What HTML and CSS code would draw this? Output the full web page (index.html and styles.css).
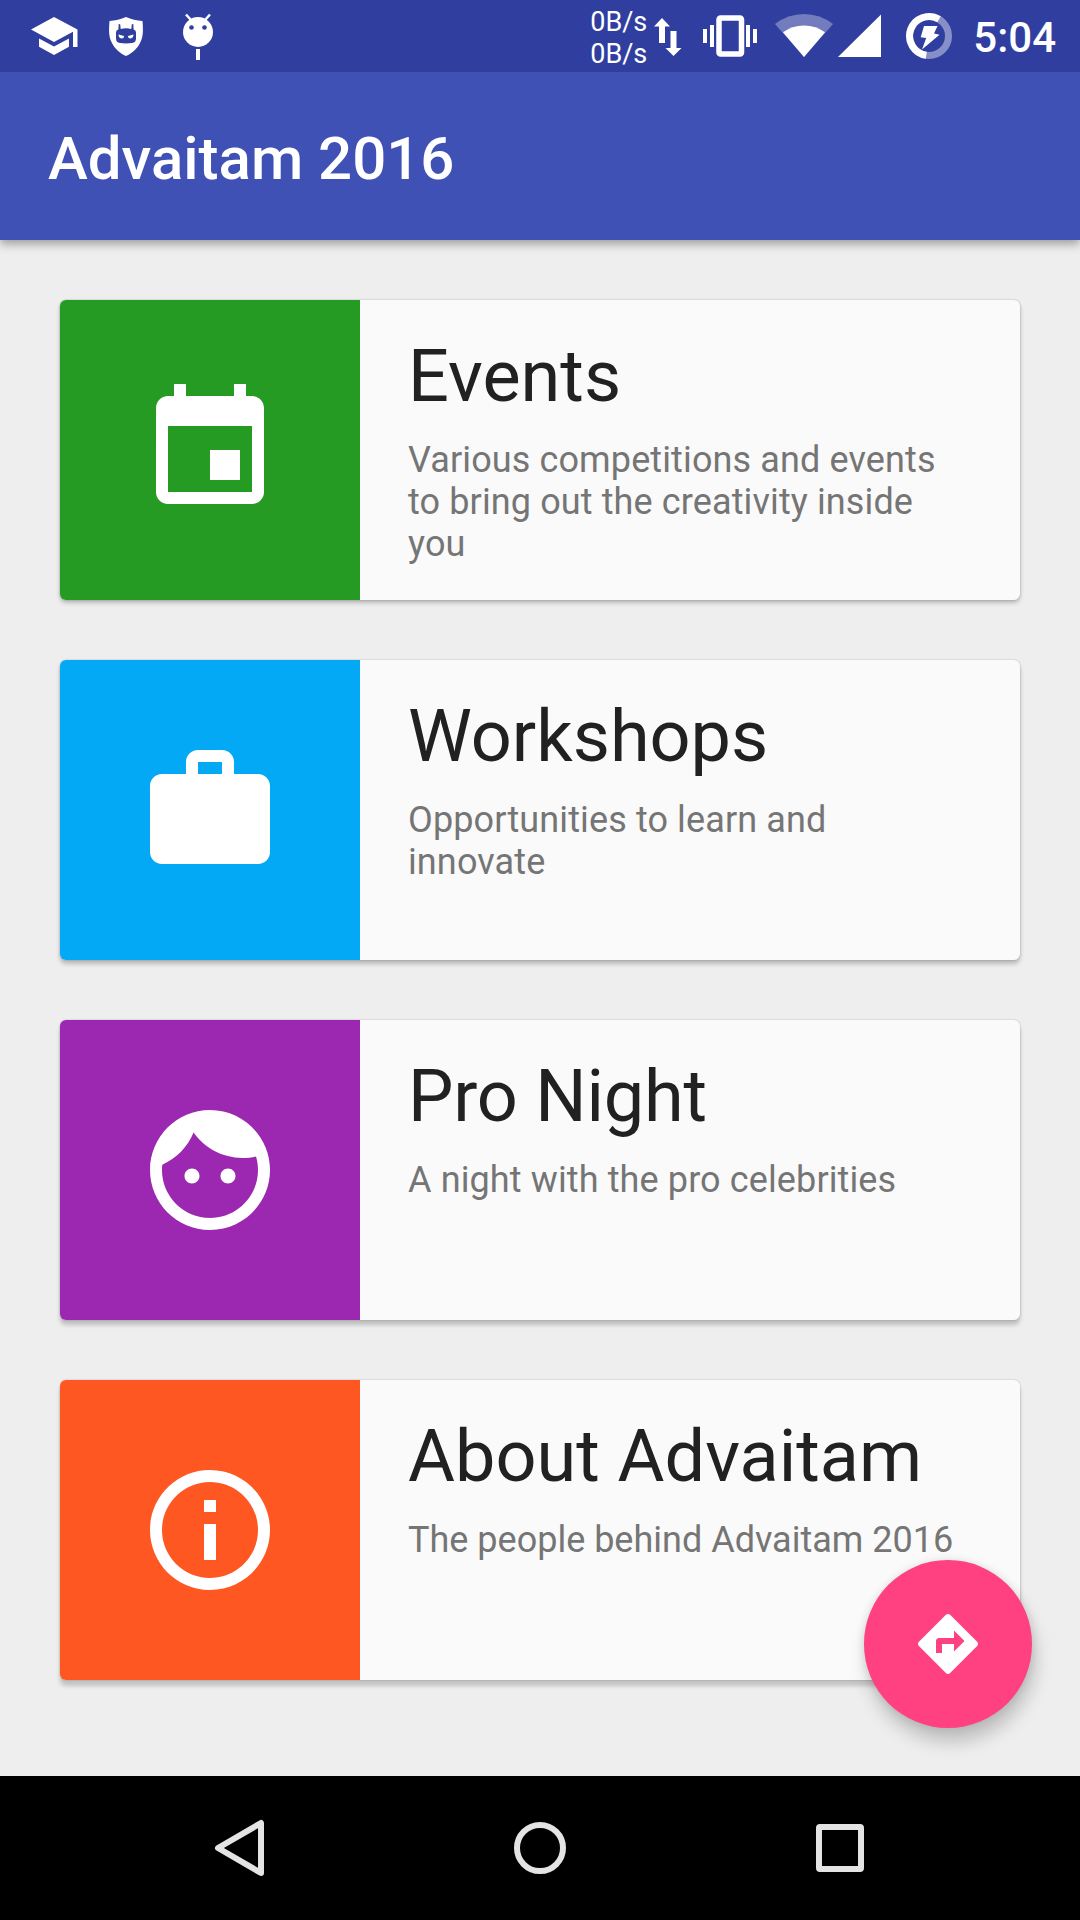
FILE: index.html
```html
<!DOCTYPE html>
<html lang="en">
<head>
    <meta charset="UTF-8">
    <title>Advaitam 2016</title>
    <link rel="stylesheet" href="styles.css">
</head>
<body>
    <div class="status-bar">
        <div class="notifications">
            <svg width="47" height="72" viewBox="31 0 47 72">
                <path d="M54 17L31 29.500 54 42l19-10.300V47h4.500V29.500zM39 38.500v8.300L54 55l15-8.200v-8.300L54 46.500z"/>
            </svg>
            <svg width="36" height="72" viewBox="108 0 36 72">
                <path d="M126 17c5 2.500 11 3.500 16.500 4 .8 10 .8 16-2.500 22-3 6-8 10.500-14 13-6-2.500-11-7-14-13-3.300-6-3.300-12-2.500-22 5.500-.5 11.500-1.500 16.500-4z"/>
                <path class="cutout" d="M118.700 24l1.500.3.5 4.700q5.300-1.500 10.600 0l.5-4.700 1.500-.3.3 5.500q2.400.6 2.400 3v6q0 4-4 4.500-6 .8-12 0-4-.5-4-4.500v-6q0-2.400 2.400-3z"/>
                <path d="M118.500 34.500l5.500 1.500q0 2.500-2.500 2.500-3-.5-3-4zM133.500 34.500l-5.500 1.500q0 2.500 2.500 2.500 3-.5 3-4z"/>
            </svg>
            <svg width="32" height="72" viewBox="182 0 32 72">
                <circle cx="198" cy="32" r="15"/>
                <path class="antenna" d="M186 14.500l5 5.500M210 14.500l-5 5.500"/>
                <circle class="cutout" cx="191.500" cy="27.500" r="2.300"/>
                <circle class="cutout" cx="204.500" cy="27.500" r="2.300"/>
                <path d="M196 49h4v11h-4z"/>
            </svg>
        </div>
        <div class="system">
            <div class="speed">
                <span>0B/s</span>
                <span>0B/s</span>
            </div>
            <svg class="arrows" width="28" height="72" viewBox="654 0 28 72">
                <path d="M662 18l8 8.500h-5V43h-6V26.500h-5zM670.500 31h6v17h5l-8 8-8-8h5z"/>
            </svg>
            <svg class="vibrate" width="54" height="72" viewBox="703 0 54 72">
                <rect class="phone" x="719" y="18" width="22.500" height="36" rx="1.500"/>
                <path d="M703 29h4v14h-4zM710 25h4v22h-4zM746 25h4v22h-4zM753 29h4v14h-4z"/>
            </svg>
            <svg class="wifi" width="58" height="72" viewBox="775 0 58 72">
                <path class="faded" d="M804 57L775 24q13-10 29-10t29 10z"/>
                <path d="M804 57L783 32.300q9-6.800 21-6.800t21 6.800z"/>
            </svg>
            <svg class="signal" width="43" height="72" viewBox="838 0 43 72">
                <path d="M838 57l43-42.500V57z"/>
            </svg>
            <svg class="battery" width="46" height="72" viewBox="906 0 46 72">
                <circle class="ring faded" cx="929" cy="36" r="19.500"/>
                <path class="ring" d="M926.300 55.300A19.500 19.500 0 1 1 939 19.200"/>
                <path d="M924 26h13.500l-3.500 7.500 5.500 1.200L922 49.500l4.200-11.500-5.500-.7z"/>
            </svg>
            <span class="clock">5:04</span>
        </div>
    </div>

    <div class="toolbar">
        <h1>Advaitam 2016</h1>
    </div>

    <div class="container">
        <div class="card">
            <div class="card-icon green">
                <svg viewBox="0 0 24 24"><path d="M17 12h-5v5h5v-5zM16 1v2H8V1H6v2H5c-1.110 0-1.990.9-1.990 2L3 19c0 1.100.89 2 2 2h14c1.100 0 2-.9 2-2V5c0-1.100-.9-2-2-2h-1V1h-2zm3 18H5V8h14v11z"/></svg>
            </div>
            <div class="card-text">
                <h2>Events</h2>
                <p>Various competitions and events to bring out the creativity inside you</p>
            </div>
        </div>

        <div class="card second">
            <div class="card-icon blue">
                <svg viewBox="0 0 24 24"><path d="M20 6h-4V4c0-1.110-.89-2-2-2h-4c-1.110 0-2 .89-2 2v2H4c-1.110 0-2 .89-2 2v11c0 1.110.89 2 2 2h16c1.110 0 2-.89 2-2V8c0-1.110-.89-2-2-2zm-6 0h-4V4h4v2z"/></svg>
            </div>
            <div class="card-text">
                <h2>Workshops</h2>
                <p>Opportunities to learn and innovate</p>
            </div>
        </div>

        <div class="card third">
            <div class="card-icon purple">
                <svg viewBox="0 0 24 24"><path d="M9 11.750c-.69 0-1.250.56-1.250 1.250s.56 1.250 1.250 1.250 1.250-.56 1.250-1.250-.56-1.250-1.250-1.250zm6 0c-.69 0-1.250.56-1.250 1.250s.56 1.250 1.250 1.250 1.250-.56 1.250-1.250-.56-1.250-1.250-1.250zM12 2C6.480 2 2 6.480 2 12s4.480 10 10 10 10-4.480 10-10S17.520 2 12 2zm0 18c-4.410 0-8-3.590-8-8 0-.29.02-.58.05-.86 2.360-1.050 4.230-2.980 5.210-5.370C11.070 8.330 14.050 10 17.420 10c.78 0 1.530-.09 2.250-.26.21.71.33 1.470.33 2.260 0 4.410-3.590 8-8 8z"/></svg>
            </div>
            <div class="card-text">
                <h2>Pro Night</h2>
                <p>A night with the pro celebrities</p>
            </div>
        </div>

        <div class="card fourth">
            <div class="card-icon orange">
                <svg viewBox="0 0 24 24"><path d="M11 17h2v-6h-2v6zm1-15C6.480 2 2 6.480 2 12s4.480 10 10 10 10-4.480 10-10S17.520 2 12 2zm0 18c-4.410 0-8-3.590-8-8s3.590-8 8-8 8 3.590 8 8-3.590 8-8 8zM11 9h2V7h-2v2z"/></svg>
            </div>
            <div class="card-text">
                <h2>About Advaitam</h2>
                <p>The people behind Advaitam 2016</p>
            </div>
        </div>

        <button class="fab" aria-label="Directions">
            <svg viewBox="0 0 24 24"><path d="M21.710 11.290l-9-9c-.39-.39-1.020-.39-1.410 0l-9 9c-.39.39-.39 1.020 0 1.410l9 9c.39.39 1.020.39 1.410 0l9-9c.39-.38.39-1.010 0-1.410zM14 14.500V12h-4v3H8v-4c0-.55.45-1 1-1h5V7.500l3.500 3.500-3.500 3.500z"/></svg>
        </button>
    </div>

    <div class="nav-bar">
        <svg viewBox="0 0 72 72"><path d="M57 11v50L14 36z"/></svg>
        <svg viewBox="0 0 72 72"><circle cx="36" cy="36" r="23"/></svg>
        <svg viewBox="0 0 72 72"><rect x="15" y="15" width="42" height="42" rx="1"/></svg>
    </div>
</body>
</html>
```

FILE: styles.css
```css
* {
    box-sizing: border-box;
}
body {
    margin: 0;
    width: 1080px;
    height: 1920px;
    overflow: hidden;
    display: flex;
    flex-direction: column;
    background: #eeeeee;
    font-family: Roboto, sans-serif;
}
h1, h2, p {
    margin: 0;
}
svg {
    display: block;
    flex: none;
    fill: #fff;
}

/* Status bar */
.status-bar {
    position: relative;
    z-index: 1;
    display: flex;
    justify-content: space-between;
    height: 72px;
    padding: 0 24px 0 31px;
    background: #303f9f;
    color: #fff;
}
.notifications {
    display: flex;
    gap: 30px;
}
.notifications svg:last-child {
    margin-left: 8px;
}
.cutout {
    fill: #303f9f;
}
.antenna {
    fill: none;
    stroke: #fff;
    stroke-width: 2.5;
}
.system {
    display: flex;
}
.speed {
    display: flex;
    flex-direction: column;
    padding-top: 6px;
    font-size: 27px;
    line-height: 32px;
}
.arrows {
    margin-left: 7px;
}
.vibrate {
    margin-left: 21px;
}
.phone {
    fill: none;
    stroke: #fff;
    stroke-width: 5.5;
}
.wifi {
    margin-left: 18px;
}
.signal {
    margin-left: 5px;
}
.battery {
    margin-left: 25px;
}
.ring {
    fill: none;
    stroke: #fff;
    stroke-width: 7;
}
.faded {
    opacity: 0.32;
}
.ring.faded {
    opacity: 0.42;
}
.clock {
    margin-left: 21px;
    font-size: 42px;
    font-weight: 500;
    line-height: 75px;
}

/* Toolbar */
.toolbar {
    display: flex;
    align-items: center;
    height: 168px;
    padding: 6px 48px 0;
    background: #3f51b5;
    color: #fff;
    box-shadow: 0 4px 9px rgba(0, 0, 0, 0.34);
}
.toolbar h1 {
    font-size: 60px;
    font-weight: 500;
    line-height: 70px;
}

/* Cards */
.container {
    position: relative;
    flex: 1;
    display: flex;
    flex-direction: column;
    gap: 60px;
    padding: 60px;
}
.card {
    display: flex;
    height: 300px;
    border-radius: 6px;
    background: #fafafa;
    box-shadow: 0 0 2px rgba(0, 0, 0, 0.25), 0 3px 4px rgba(0, 0, 0, 0.22);
}
.card.second {
    box-shadow: 0 0 2px rgba(0, 0, 0, 0.25), 0 4px 4px rgba(0, 0, 0, 0.22);
}
.card.third {
    box-shadow: 0 0 2px rgba(0, 0, 0, 0.25), 0 5px 4px rgba(0, 0, 0, 0.2);
}
.card.fourth {
    box-shadow: 0 0 2px rgba(0, 0, 0, 0.25), 0 6px 4px rgba(0, 0, 0, 0.18);
}
.card-icon {
    display: flex;
    justify-content: center;
    align-items: center;
    width: 300px;
    border-radius: 6px 0 0 6px;
}
.card-icon svg {
    width: 144px;
    height: 144px;
}
.green {
    background: #259b24;
}
.blue {
    background: #03a9f4;
}
.purple {
    background: #9c27b0;
}
.orange {
    background: #ff5722;
}
.card-text {
    flex: 1;
    padding: 35px 60px 0 48px;
}
.card-text h2 {
    color: #212121;
    font-size: 72px;
    font-weight: 400;
    line-height: 84px;
}
.card-text p {
    margin-top: 20px;
    color: #757575;
    font-size: 36px;
    letter-spacing: 0.12px;
    line-height: 42px;
}
.third h2 {
    letter-spacing: -0.2px;
}
.fourth p {
    letter-spacing: 0;
}

/* Floating button over the last card */
.fab {
    position: absolute;
    right: 48px;
    bottom: 48px;
    display: flex;
    justify-content: center;
    align-items: center;
    width: 168px;
    height: 168px;
    padding: 0;
    border: none;
    border-radius: 50%;
    background: #ff4081;
    box-shadow: 0 0 8px rgba(0, 0, 0, 0.1), 3px 14px 18px rgba(0, 0, 0, 0.2);
}
.fab svg {
    width: 72px;
    height: 72px;
}

/* Navigation bar */
.nav-bar {
    display: flex;
    justify-content: space-between;
    align-items: center;
    height: 144px;
    padding: 0 204px;
    background: #000;
}
.nav-bar svg {
    width: 72px;
    height: 72px;
    fill: none;
    stroke: #e4e4e4;
    stroke-width: 6;
    stroke-linejoin: round;
}
```
